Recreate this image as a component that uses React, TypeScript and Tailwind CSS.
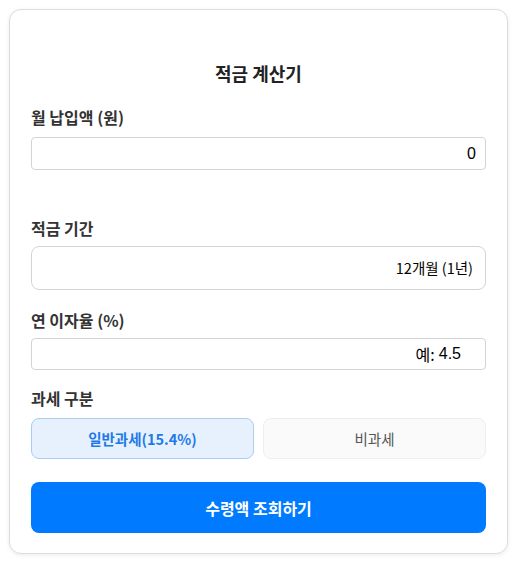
import React from "react";

export default function App() {
  const font = { fontFamily: '"Noto Sans CJK KR", "Noto Sans", sans-serif' };
  return (
    <div className="min-h-[566px] w-[518px] bg-white pt-[9px] pl-[9px]" style={font}>
      <div className="w-[499px] rounded-[12px] border border-[#dddddd] bg-white px-[21px] pt-[50px] pb-[20px] shadow-[0_1px_4px_rgba(0,0,0,0.08)]">
        <h2 className="text-center text-[18px] leading-[27px] font-bold text-[#222]">적금 계산기</h2>

        <div className="mt-[18px] text-[16px] leading-[24px] font-semibold text-[#333]">월 납입액 (원)</div>
        <div className="mt-[8px] flex h-[33px] items-center justify-end rounded-[4px] border border-[#d4d4d4] pr-[9px] text-[16px] text-black" style={{ fontFamily: '"Liberation Sans", Arial, sans-serif' }}>
          0
        </div>

        <div className="mt-[46px] text-[16px] leading-[24px] font-semibold text-[#333]">적금 기간</div>
        <div className="mt-[6px] flex h-[44px] items-center justify-end rounded-[8px] border border-[#d4d4d4] pr-[12px] text-[14.5px] text-black">
          12개월 (1년)
        </div>

        <div className="mt-[18px] text-[16px] leading-[24px] font-semibold text-[#333]">연 이자율 (%)</div>
        <div className="mt-[6px] flex h-[32px] items-center justify-end rounded-[4px] border border-[#d4d4d4] pr-[24px] text-[16px] text-black">
          예: <span className="ml-[4px]" style={{ fontFamily: '"Liberation Sans", Arial, sans-serif' }}>4.5</span>
        </div>

        <div className="mt-[16px] text-[16px] leading-[24px] font-semibold text-[#333]">과세 구분</div>
        <div className="mt-[8px] grid grid-cols-2 gap-[9px]">
          <div className="flex h-[41px] items-center justify-center rounded-[8px] border border-[#a9cdf5] bg-[#e7f1fe] text-[14.5px] font-semibold text-[#1f7ae6]">
            일반과세(15.4%)
          </div>
          <div className="flex h-[41px] items-center justify-center rounded-[8px] border border-[#eeeeee] bg-[#fafafa] text-[14.5px] text-[#555]">
            비과세
          </div>
        </div>

        <div className="mt-[23px] flex h-[51px] items-center justify-center rounded-[8px] bg-[#007bff] text-[16px] font-bold text-white">
          수령액 조회하기
        </div>
      </div>
    </div>
  );
}
